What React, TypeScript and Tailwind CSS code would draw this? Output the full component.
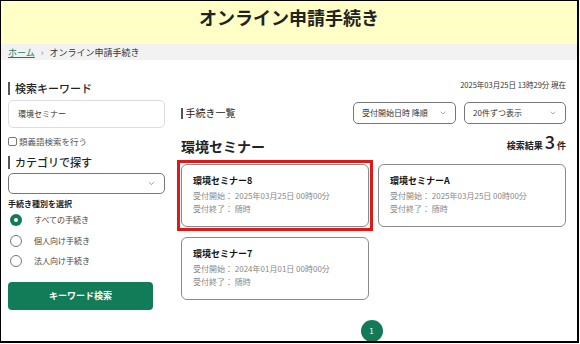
import { ChevronDown } from "lucide-react";

type Card = {
  title: string;
  start: string;
  selected?: boolean;
};

const cards: Card[] = [
  { title: "環境セミナー8", start: "2025年03月25日 00時00分", selected: true },
  { title: "環境セミナーA", start: "2025年03月25日 00時00分" },
  { title: "環境セミナー7", start: "2024年01月01日 00時00分" },
];

const radios = ["すべての手続き", "個人向け手続き", "法人向け手続き"];

function SideHeading({ label }: { label: string }) {
  return (
    <div className="flex h-[14px] items-center gap-[5px]">
      <span className="h-[13px] w-[2px] bg-[#555]" />
      <span className="text-[11px] font-medium leading-[14px] text-[#222]">{label}</span>
    </div>
  );
}

function ProcCard({ card }: { card: Card }) {
  return (
    <div className="relative h-[63px] rounded-[6px] border border-[#8a8a8a] bg-white px-[11px] pt-[9px]">
      {card.selected && (
        <span className="pointer-events-none absolute -inset-[5px] border-[3px] border-[#e01818]" />
      )}
      <p className="text-[9px] font-bold leading-[14px] text-[#111]">{card.title}</p>
      <p className="mt-[1px] text-[8px] leading-[13px] text-[#888]">受付開始： {card.start}</p>
      <p className="text-[8px] leading-[13px] text-[#888]">受付終了： 随時</p>
    </div>
  );
}

export default function App() {
  return (
    <div
      className="h-[344px] w-[580px] bg-white"
      style={{ fontFamily: '"Noto Sans CJK JP", "Noto Sans", sans-serif' }}
    >
      <div className="h-[343px] w-[579px] overflow-hidden border-t border-l border-r-2 border-b-2 border-black">
        <header className="flex h-[43px] justify-center bg-[#ffffc6] pt-[3px]">
          <h1 className="text-[18px] font-bold leading-[26px] text-[#222]">オンライン申請手続き</h1>
        </header>
        <nav className="flex h-[16px] items-center gap-[6px] bg-[#f2f2f2] px-[7px] text-[9px] leading-none text-[#333]">
          <span className="text-[#1a7f5f] underline">ホーム</span>
          <span className="text-[#888]">›</span>
          <span>オンライン申請手続き</span>
        </nav>

        <div className="flex gap-[16px] px-[7px]">
          {/* left sidebar */}
          <aside className="w-[157px] pt-[21px]">
            <SideHeading label="検索キーワード" />
            <div className="mt-[5px] flex h-[28px] items-center rounded-[5px] border border-[#ddd] px-[9px] text-[8px] leading-[12px] text-[#333]">
              環境セミナー
            </div>
            <label className="mt-[7px] flex h-[12px] items-center gap-[2px] text-[8.5px] leading-[12px] text-[#555]">
              <span className="h-[9px] w-[9px] rounded-[2px] border border-[#777] bg-white" />
              類義語検索を行う
            </label>
            <div className="mt-[8px]">
              <SideHeading label="カテゴリで探す" />
            </div>
            <div className="mt-[4px] flex h-[21px] items-center justify-end rounded-[5px] border border-[#777] pr-[8px]">
              <ChevronDown size={9} strokeWidth={1.5} className="text-[#555]" />
            </div>
            <p className="mt-[4px] text-[8px] font-bold leading-[12px] text-[#222]">手続き種別を選択</p>
            <div className="flex flex-col">
              {radios.map((r, i) => (
                <div key={r} className="flex h-[20.5px] items-center gap-[12px] pl-[2px] text-[8px] leading-[12px] text-[#444]">
                  {i === 0 ? (
                    <span className="flex h-[12px] w-[12px] items-center justify-center rounded-full bg-[#137a58]">
                      <span className="h-[4px] w-[4px] rounded-full bg-white" />
                    </span>
                  ) : (
                    <span className="h-[12px] w-[12px] rounded-full border border-[#777] bg-white" />
                  )}
                  {r}
                </div>
              ))}
            </div>
            <button className="mt-[10px] flex h-[28px] w-[145px] items-center justify-center rounded-[4px] bg-[#127b58] text-[9px] font-bold leading-[12px] text-white">
              キーワード検索
            </button>
          </aside>

          {/* main */}
          <main className="w-[385px] pt-[19px]">
            <p className="text-right text-[7.5px] leading-[12px] text-[#333]">2025年03月25日 13時29分 現在</p>
            <div className="mt-[11px] flex items-center">
              <div className="flex items-center gap-[3px]">
                <span className="h-[11px] w-[1.5px] bg-[#555]" />
                <span className="text-[10px] leading-[14px] text-[#222]">手続き一覧</span>
              </div>
              <div className="ml-auto flex gap-[8px]">
                <div className="flex h-[22px] w-[103px] items-center justify-between rounded-[5px] border border-[#777] px-[8px] text-[8px] leading-[12px] text-[#333]">
                  受付開始日時 降順
                  <ChevronDown size={8} strokeWidth={1.5} className="text-[#555]" />
                </div>
                <div className="flex h-[22px] w-[102px] items-center justify-between rounded-[5px] border border-[#777] px-[8px] text-[8px] leading-[12px] text-[#333]">
                  20件ずつ表示
                  <ChevronDown size={8} strokeWidth={1.5} className="text-[#555]" />
                </div>
              </div>
            </div>
            <div className="mt-[7px] flex items-end justify-between">
              <h2 className="text-[14px] font-bold leading-[20px] text-[#222]">環境セミナー</h2>
              <p className="flex items-baseline gap-[2px] text-[9px] font-bold leading-[20px] text-[#222]">
                検索結果
                <span className="text-[18px] font-medium leading-[20px]">3</span>
                件
              </p>
            </div>
            <div className="mt-[8px] grid grid-cols-2 gap-x-[9px] gap-y-[10px]">
              {cards.map((c) => (
                <ProcCard key={c.title} card={c} />
              ))}
            </div>
            <div className="mt-[20px] flex justify-center pr-[4px]">
              <span className="flex h-[22px] w-[22px] items-center justify-center rounded-full bg-[#137a58] text-[8px] leading-none text-white">
                1
              </span>
            </div>
          </main>
        </div>
      </div>
    </div>
  );
}
